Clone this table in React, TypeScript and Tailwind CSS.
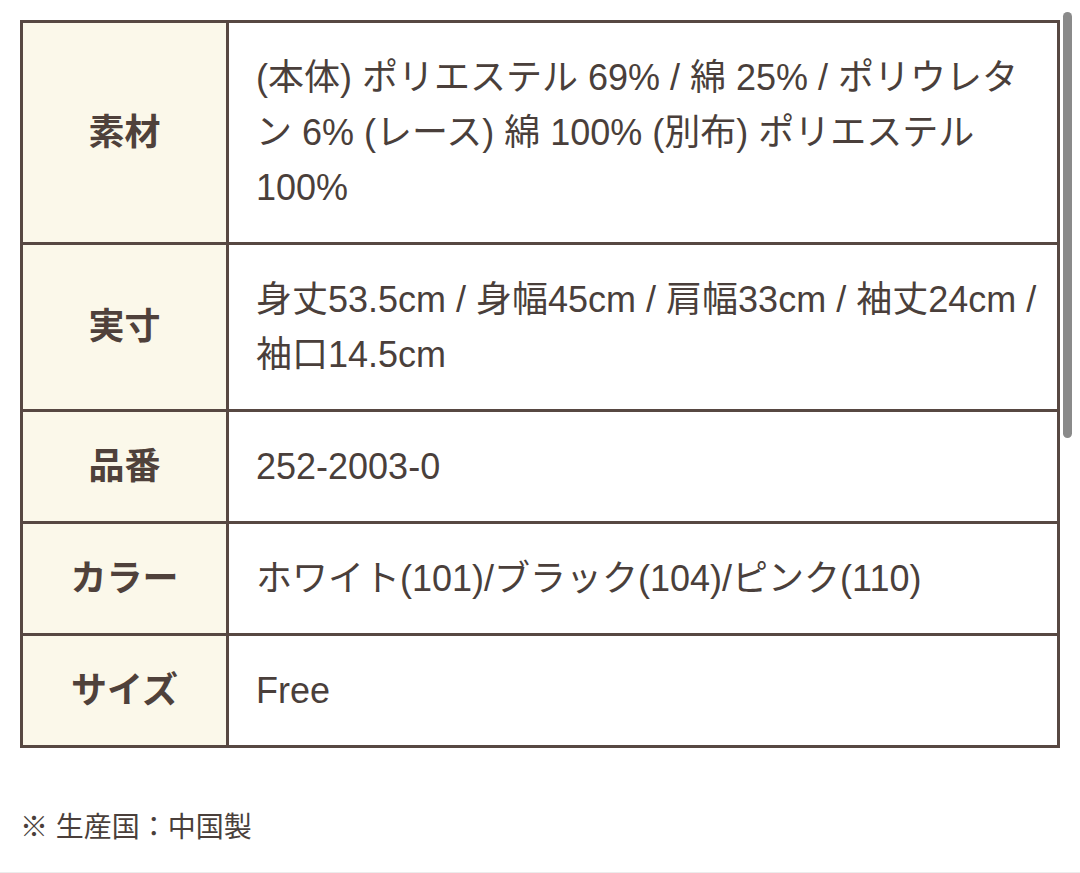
const rows: { label: string; value: string }[] = [
  {
    label: '素材',
    value: '(本体) ポリエステル 69% / 綿 25% / ポリウレタン 6% (レース) 綿 100% (別布) ポリエステル 100%',
  },
  {
    label: '実寸',
    value: '身丈53.5cm / 身幅45cm / 肩幅33cm / 袖丈24cm / 袖口14.5cm',
  },
  { label: '品番', value: '252-2003-0' },
  { label: 'カラー', value: 'ホワイト(101)/ブラック(104)/ピンク(110)' },
  { label: 'サイズ', value: 'Free' },
];

export default function App() {
  return (
    <div
      className="relative min-h-[873px] bg-white text-[#4a3f3b] border-b border-[#ececec]"
      style={{ fontFamily: '"Liberation Sans", "Noto Sans CJK JP", sans-serif' }}
    >
      <div className="px-5 pt-5">
        <table className="w-full border-collapse border-[3px] border-[#574842]">
          <tbody>
            {rows.map((row) => (
              <tr key={row.label}>
                <th className="w-[206px] border-[3px] border-[#574842] bg-[#fbf8ea] text-center align-middle text-[36px] font-bold text-[#4f413b]">
                  {row.label}
                </th>
                <td className="border-[3px] border-[#574842] py-[27px] pl-[27px] pr-3 text-[36px] leading-[55px]">
                  {row.value}
                </td>
              </tr>
            ))}
          </tbody>
        </table>
      </div>

      <p className="mt-[60px] px-5 text-[28px] leading-[40px]">※ 生産国：中国製</p>

      {/* scrollbar thumb */}
      <div className="absolute right-[8px] top-[12px] h-[426px] w-[9px] rounded-full bg-[#8a8a8a]" />
    </div>
  );
}
